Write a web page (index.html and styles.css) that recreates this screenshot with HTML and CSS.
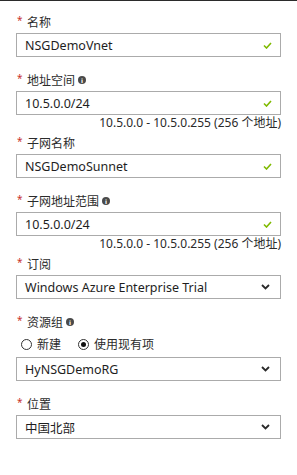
FILE: index.html
```html
<!DOCTYPE html>
<html lang="zh-CN">
<head>
    <meta charset="UTF-8">
    <title>创建虚拟网络</title>
    <link rel="stylesheet" href="styles.css">
</head>
<body>
    <div class="form">
        <div class="field">
            <div class="label"><span class="req">*</span>名称</div>
            <div class="box">
                <span class="value">NSGDemoVnet</span>
                <svg class="check" width="9" height="7" viewBox="0 0 9 7"><polyline points="1,3.5 3.5,6 8,1" /></svg>
            </div>
        </div>

        <div class="field has-hint">
            <div class="label"><span class="req">*</span>地址空间<span class="info">i</span></div>
            <div class="box">
                <span class="value">10.5.0.0/24</span>
                <svg class="check" width="9" height="7" viewBox="0 0 9 7"><polyline points="1,3.5 3.5,6 8,1" /></svg>
            </div>
            <div class="hint">10.5.0.0 - 10.5.0.255 (256 个地址)</div>
        </div>

        <div class="field">
            <div class="label"><span class="req">*</span>子网名称</div>
            <div class="box">
                <span class="value">NSGDemoSunnet</span>
                <svg class="check" width="9" height="7" viewBox="0 0 9 7"><polyline points="1,3.5 3.5,6 8,1" /></svg>
            </div>
        </div>

        <div class="field has-hint">
            <div class="label"><span class="req">*</span>子网地址范围<span class="info">i</span></div>
            <div class="box">
                <span class="value">10.5.0.0/24</span>
                <svg class="check" width="9" height="7" viewBox="0 0 9 7"><polyline points="1,3.5 3.5,6 8,1" /></svg>
            </div>
            <div class="hint">10.5.0.0 - 10.5.0.255 (256 个地址)</div>
        </div>

        <div class="field">
            <div class="label"><span class="req">*</span>订阅</div>
            <div class="box">
                <span class="value">Windows Azure Enterprise Trial</span>
                <svg class="chevron" width="9" height="6" viewBox="0 0 9 6"><polyline points="1,1 4.5,4.5 8,1" /></svg>
            </div>
        </div>

        <div class="field">
            <div class="label"><span class="req">*</span>资源组<span class="info">i</span></div>
            <div class="radios">
                <span class="radio"></span><span class="radio-text">新建</span>
                <span class="radio checked"></span><span class="radio-text">使用现有项</span>
            </div>
            <div class="box">
                <span class="value">HyNSGDemoRG</span>
                <svg class="chevron" width="9" height="6" viewBox="0 0 9 6"><polyline points="1,1 4.5,4.5 8,1" /></svg>
            </div>
        </div>

        <div class="field">
            <div class="label"><span class="req">*</span>位置</div>
            <div class="box">
                <span class="value">中国北部</span>
                <svg class="chevron" width="9" height="6" viewBox="0 0 9 6"><polyline points="1,1 4.5,4.5 8,1" /></svg>
            </div>
        </div>
    </div>
</body>
</html>
```

FILE: styles.css
```css
* {
    margin: 0;
    padding: 0;
    box-sizing: border-box;
}

body {
    background: #fff;
    border-top: 1px solid #2b2b2b;
    font-family: 'Noto Sans', 'Noto Sans CJK SC', sans-serif;
    color: #222;
}

.form {
    padding: 10px 16px 0 16px;
}

.field {
    margin-bottom: 12px;
}

.field.has-hint {
    margin-bottom: 0;
}

.label {
    display: flex;
    align-items: center;
    height: 22px;
    font-size: 12px;
    color: #2b2b2b;
}

.req {
    color: #c8322d;
    font-size: 10px;
    width: 10px;
    margin-left: 1px;
    align-self: flex-start;
    line-height: 18px;
}

.info {
    display: inline-flex;
    justify-content: center;
    align-items: center;
    width: 8px;
    height: 8px;
    margin-left: 3px;
    border-radius: 50%;
    background: #4a4a4a;
    color: #fff;
    font-size: 6px;
    font-weight: bold;
    font-family: 'DejaVu Sans', sans-serif;
}

.box {
    display: flex;
    align-items: center;
    justify-content: space-between;
    height: 24px;
    border: 1px solid #ababab;
    padding: 0 8px 0 8px;
    font-size: 12.5px;
    color: #1e1e1e;
}

.check polyline {
    fill: none;
    stroke: #7fba00;
    stroke-width: 1.6;
}

.chevron {
    margin-right: 2px;
}

.chevron polyline {
    fill: none;
    stroke: #2a2a2a;
    stroke-width: 1.8;
}

.hint {
    text-align: right;
    font-size: 12px;
    line-height: 16px;
    height: 17px;
    color: #2a2a2a;
}

.radios {
    display: flex;
    align-items: center;
    height: 22px;
    margin-bottom: 2px;
    padding-left: 5px;
    font-size: 12px;
    color: #2b2b2b;
}

.radio {
    width: 11px;
    height: 11px;
    border: 1px solid #333;
    border-radius: 50%;
    display: flex;
    justify-content: center;
    align-items: center;
}

.radio.checked::after {
    content: '';
    width: 5px;
    height: 5px;
    border-radius: 50%;
    background: #111;
}

.radio-text {
    margin-left: 5px;
    margin-right: 17px;
}
```
